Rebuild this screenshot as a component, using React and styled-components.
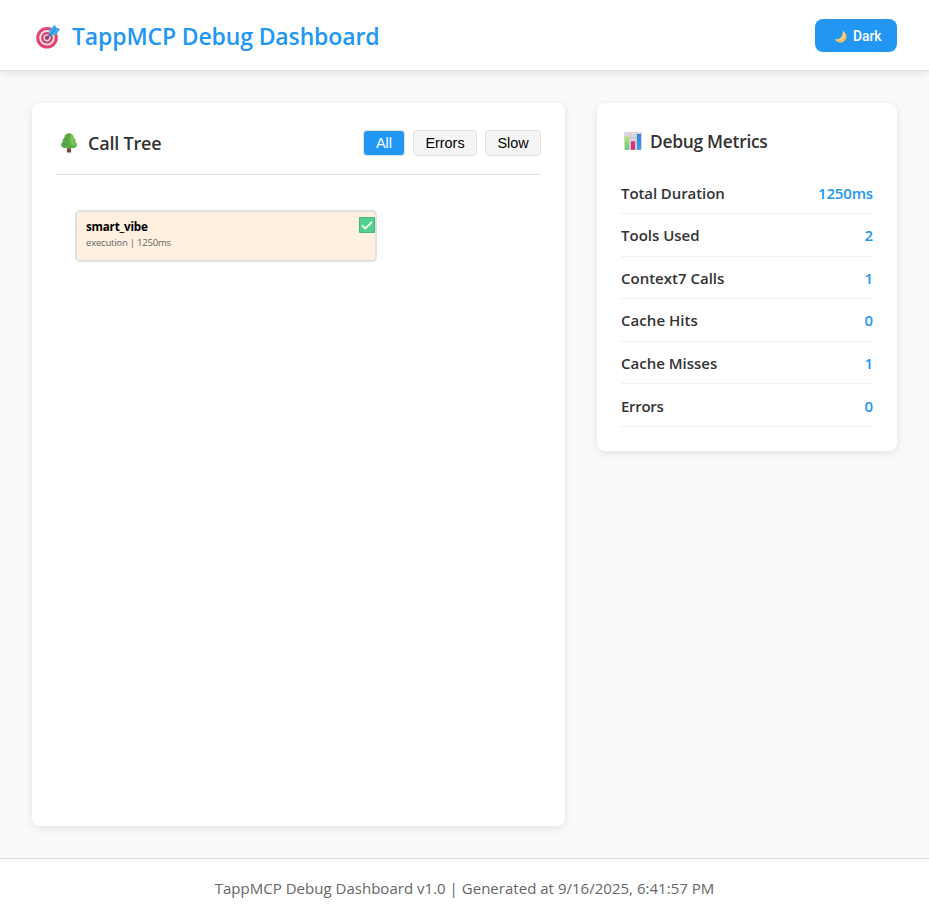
import React from "react";
import styled, { createGlobalStyle } from "styled-components";

const GlobalStyle = createGlobalStyle`
  * { box-sizing: border-box; margin: 0; padding: 0; }
  body { background: #fafafa; color: #333; font-family: "Open Sans", "Noto Sans", sans-serif; }
`;

const Page = styled.div`
  display: flex;
  flex-direction: column;
  height: 917px;
`;

const Header = styled.header`
  flex: none;
  display: flex;
  align-items: center;
  justify-content: space-between;
  height: 71px;
  padding: 0 32px;
  background: #fff;
  border-bottom: 1px solid #e0e0e0;
  box-shadow: 0 2px 8px rgba(0, 0, 0, 0.1);
`;

const Brand = styled.h1`
  display: flex;
  align-items: center;
  height: 33px;
  padding: 2px 0 0 4px;
  gap: 11px;
  color: #2196f3;
  font-size: 23px;
  font-weight: 600;
  line-height: 30px;
  white-space: nowrap;
`;

const Text = styled.span`
  letter-spacing: ${({ $track }) => $track || 0}px;
  white-space: nowrap;
`;

const ThemeButton = styled.button`
  display: flex;
  align-items: center;
  width: 82px;
  height: 33px;
  padding: 2px 0 0 19px;
  gap: 6px;
  border: 0;
  border-radius: 8px;
  background: #2196f3;
  color: #fff;
  font: 500 13.8px Roboto, sans-serif;
`;

const Main = styled.main`
  flex: 1;
  display: grid;
  grid-template-columns: 1fr 300px;
  gap: 32px;
  padding: 32px;
`;

const Card = styled.section`
  align-self: ${({ $fit }) => ($fit ? "start" : "stretch")};
  height: ${({ $fit }) => ($fit ? "348px" : "auto")};
  padding: 24px;
  border-radius: 8px;
  background: #fff;
  box-shadow: 0 2px 8px rgba(0, 0, 0, 0.1);
`;

const TreeHeader = styled.div`
  display: flex;
  align-items: flex-start;
  justify-content: space-between;
  height: 48px;
  padding-top: 3px;
  border-bottom: 1px solid #e0e0e0;
`;

const CardTitle = styled.h2`
  display: flex;
  align-items: center;
  height: ${({ $height }) => $height}px;
  padding-left: ${({ $inset }) => $inset}px;
  gap: ${({ $gap }) => $gap}px;
  font-size: ${({ $size }) => $size}px;
  font-weight: 600;
  line-height: 26px;
`;

const Filters = styled.div`
  display: flex;
  gap: 8px;
`;

const FilterButton = styled.button`
  width: ${({ $width }) => $width}px;
  height: 26px;
  border: 1px solid #e0e0e0;
  border-radius: 4px;
  background: ${({ $active }) => ($active ? "#2196f3" : "#f5f5f5")};
  color: ${({ $active }) => ($active ? "#fff" : "#000")};
  font: 14.4px "Liberation Sans", Arial, sans-serif;
  line-height: 24px;
`;

const TreeNode = styled.div`
  display: flex;
  justify-content: space-between;
  width: 302px;
  height: 52px;
  margin: 35px 0 0 19px;
  padding: 5px 0 0 9px;
  border: 2px solid #e0e0e0;
  border-radius: 5px;
  background: #fff0df;
`;

const NodeName = styled.div`
  height: 18px;
  margin-top: 1px;
  color: #000;
  font-size: 11.7px;
  font-weight: 700;
  line-height: 16px;
`;

const NodeMeta = styled.div`
  color: #666;
  font-size: 9.6px;
  line-height: 14px;
`;

const Metrics = styled.dl`
  display: grid;
  grid-template-rows: repeat(6, 42.6px);
  margin-top: 16.4px;
`;

const Metric = styled.div`
  display: flex;
  align-items: center;
  justify-content: space-between;
  border-bottom: 1px solid #f0f0f0;
  padding-top: 1px;
  font-size: 15px;
  font-weight: 600;
`;

const Value = styled.dd`
  color: #2196f3;
`;

const Footer = styled.footer`
  flex: none;
  height: 59px;
  border-top: 1px solid #e0e0e0;
  background: #fff;
  color: #666;
  font-size: 15px;
  line-height: 59px;
  text-align: center;
`;

const TargetIcon = () => (
  <svg width="25" height="25" viewBox="0 0 25 25">
    <circle cx="11" cy="13.8" r="10.8" fill="#e0446f" />
    <circle cx="11" cy="13.8" r="7.8" fill="#ecdfe9" />
    <circle cx="11" cy="13.8" r="5.8" fill="#d83b67" />
    <circle cx="11" cy="13.8" r="3.6" fill="#ecdfe9" />
    <circle cx="11" cy="13.8" r="2.2" fill="#d03263" />
    <path d="m11 13.8 6-5.6" stroke="#2879b8" strokeWidth="1.6" />
    <path d="m13.8 11.2-.5-5.4L19 .8l1.2 3L24.3 5 19.8 11Z" fill="#46a9e8" />
    <path d="m14 11 6.2-6.8" stroke="#1c7fc6" strokeWidth="1" />
  </svg>
);

const MoonIcon = () => (
  <svg width="13" height="13" viewBox="0 0 14 14">
    <path d="M9.5.8C14 3.5 14.7 9 11 12 7.6 14.7 2.6 13.5.8 9.7c4.2 1.2 9.2-1.5 8.7-8.9Z" fill="#fbd07c" />
    <path d="M.8 9.7C3 11.7 8.4 12 11 7.7c1.4-2.3.6-5.3-1.5-6.9C14 3.5 14.7 9 11 12 7.6 14.7 2.6 13.5.8 9.7Z" fill="#eda34b" opacity=".4" />
  </svg>
);

const TreeIcon = () => (
  <svg width="18" height="20" viewBox="0 0 18 20">
    <path d="M7.2 13h3.6l.4 6.5H6.8Z" fill="#74494b" />
    <path d="M9 .3c2.6 0 4.7 2.2 4.7 4.7 1.5.9 2.1 2.4 1.6 4 1.5 1 2 2.3 1.5 3.8-.8 2-3 2.5-4.9 2.2-1.8.8-4 .8-5.8 0-1.9.3-4.1-.2-4.9-2.2-.5-1.5 0-2.8 1.5-3.8-.5-1.6.1-3.1 1.6-4C4.3 2.5 6.4.3 9 .3Z" fill="#5aab46" />
    <path d="M10 1c2 .9 3 2.5 2.9 4.3 1.6 1 2 2.2 1.5 3.7 1.4 1 1.8 2.3 1.2 3.3-2.5 1.3-5-.3-5.1-2.5C10 7 11 4 10 1Z" fill="#78c64e" />
    <path d="M4.5 6.3c1 .7 2.3 1 3.5.6M3 10.5c1.6 1 3.5 1.1 5 .4" stroke="#459b3c" strokeWidth=".8" fill="none" />
  </svg>
);

const ChartIcon = () => (
  <svg width="18" height="18" viewBox="0 0 18 18">
    <defs>
      <linearGradient id="greenBar" x2="0" y2="1">
        <stop stopColor="#b0ec66" />
        <stop offset="1" stopColor="#62cf78" />
      </linearGradient>
      <linearGradient id="blueBar" x2="0" y2="1">
        <stop stopColor="#2d84d8" />
        <stop offset="1" stopColor="#36a4ee" />
      </linearGradient>
    </defs>
    <rect width="18" height="18" rx="1" fill="#dcd3e3" />
    <path d="M0 5.5h18M0 11.5h18M6 0v18M12 0v18" stroke="#c9bfd4" strokeWidth=".8" />
    <path d="M1 4.5h4v13.3H1Z" fill="url(#greenBar)" />
    <path d="M7 9.3h4v8.5H7Z" fill="#d83377" />
    <path d="M13 2h4v15.8h-4Z" fill="url(#blueBar)" />
  </svg>
);

const CheckIcon = () => (
  <svg width="16" height="16" viewBox="0 0 16 16">
    <rect width="16" height="16" rx="1" fill="#43b878" />
    <rect x="1" y="1" width="14" height="14" rx="1" fill="#52d18c" />
    <path d="m3 8.4 3.3 3L13 4.8" fill="none" stroke="#fff" strokeWidth="1.8" />
  </svg>
);

const IconSlot = styled.span`
  display: flex;
  flex: none;
  margin-top: ${({ $top }) => $top || 0}px;
`;

const metrics = [
  ["Total Duration", "1250ms", -0.08],
  ["Tools Used", "2", 0],
  ["Context7 Calls", "1", 0],
  ["Cache Hits", "0", 0.05],
  ["Cache Misses", "1", 0],
  ["Errors", "0", -0.3],
];

export default function App() {
  return (
    <>
      <GlobalStyle />
      <Page>
        <Header>
          <Brand>
            <TargetIcon />
            <Text $track={-0.14}>TappMCP Debug Dashboard</Text>
          </Brand>
          <ThemeButton><IconSlot $top={1}><MoonIcon /></IconSlot>Dark</ThemeButton>
        </Header>
        <Main>
          <Card>
            <TreeHeader>
              <CardTitle $inset={4} $gap={10} $height={26} $size={18}><TreeIcon /><Text $track={-0.2}>Call Tree</Text></CardTitle>
              <Filters>
                <FilterButton $width={42} $active>All</FilterButton>
                <FilterButton $width={64}>Errors</FilterButton>
                <FilterButton $width={56}>Slow</FilterButton>
              </Filters>
            </TreeHeader>
            <TreeNode>
              <div>
                <NodeName><Text $track={-0.25}>smart_vibe</Text></NodeName>
                <NodeMeta><Text $track={-0.25}>execution | 1250ms</Text></NodeMeta>
              </div>
              <CheckIcon />
            </TreeNode>
          </Card>
          <Card $fit>
            <CardTitle $inset={3} $gap={8} $height={28} $size={17.4}><ChartIcon /><Text $track={-0.28}>Debug Metrics</Text></CardTitle>
            <Metrics>
              {metrics.map(([name, value, track]) => (
                <Metric key={name}>
                  <dt><Text $track={track}>{name}</Text></dt>
                  <Value><Text $track={value.length > 1 ? -0.15 : 0}>{value}</Text></Value>
                </Metric>
              ))}
            </Metrics>
          </Card>
        </Main>
        <Footer><Text $track={0.02}>TappMCP Debug Dashboard v1.0 | Generated at 9/16/2025, 6:41:57 PM</Text></Footer>
      </Page>
    </>
  );
}
